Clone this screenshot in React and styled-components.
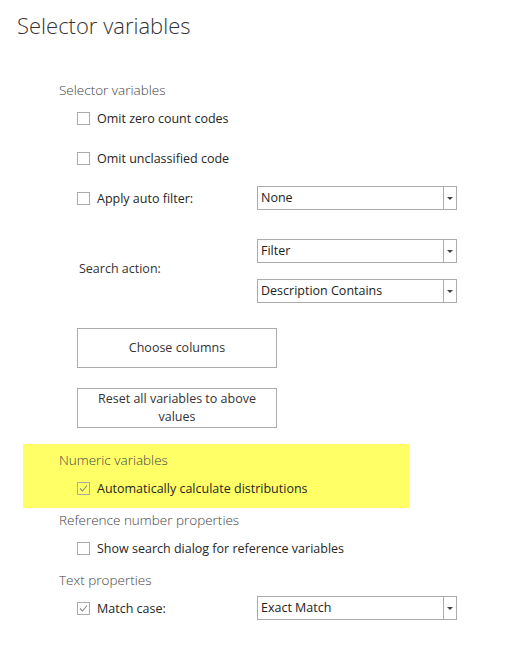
import React from "react";
import styled, { createGlobalStyle } from "styled-components";

const GlobalStyle = createGlobalStyle`
  html, body {
    margin: 0;
    padding: 0;
    background: #fff;
  }
  body {
    font-family: "Open Sans", "Noto Sans", Arial, sans-serif;
    color: #333;
  }
`;

const Page = styled.div`
  width: 520px;
  height: 659px;
  display: flex;
  flex-direction: column;
`;

const Heading = styled.h1`
  margin: 0;
  height: 50px;
  line-height: 50px;
  padding-left: 17px;
  font-size: 22px;
  font-weight: 300;
  color: #333;
`;

const Section = styled.div`
  box-sizing: border-box;
  display: flex;
  flex-direction: column;
  padding-left: ${(p) => p.indent || 59}px;
  margin-top: ${(p) => p.top || 0}px;
  gap: 4px;
`;

const Highlight = styled(Section)`
  margin-left: 23px;
  width: 386px;
  padding-left: 36px;
  padding-top: 4px;
  padding-bottom: 8px;
  background: #ffff66;
`;

const SectionTitle = styled.div`
  height: 24px;
  line-height: 24px;
  font-size: 13.5px;
  font-weight: 300;
  color: #444;
`;

const Items = styled.div`
  display: flex;
  flex-direction: column;
  gap: ${(p) => p.gap || 0}px;
  padding-left: 18px;
`;

const Row = styled.div`
  display: grid;
  grid-template-columns: 180px 200px;
  align-items: center;
  height: 24px;
`;

const CheckLabel = styled.label`
  display: flex;
  align-items: center;
  gap: 7px;
  font-size: 12.5px;
  color: #262626;
  white-space: nowrap;
`;

const Box = styled.span`
  box-sizing: border-box;
  flex: none;
  width: 13px;
  height: 13px;
  border: 1px solid #ababab;
  display: flex;
  align-items: center;
  justify-content: center;
`;

const SelectBox = styled.div`
  box-sizing: border-box;
  height: 24px;
  width: 200px;
  border: 1px solid #ababab;
  background: #fff;
  display: flex;
  align-items: stretch;
`;

const SelectValue = styled.div`
  flex: 1;
  padding-left: 3px;
  line-height: 22px;
  font-size: 12.5px;
  color: #222;
`;

const Arrow = styled.div`
  width: 12px;
  border-left: 1px solid #ababab;
  display: flex;
  align-items: center;
  justify-content: center;

  &::after {
    content: "";
    border-left: 3px solid transparent;
    border-right: 3px solid transparent;
    border-top: 3px solid #444;
  }
`;

const SearchBlock = styled.div`
  display: grid;
  grid-template-columns: 180px 200px;
  align-items: center;
  margin-top: 25px;
`;

const SearchLabel = styled.div`
  padding-left: 2px;
  padding-bottom: 6px;
  font-size: 12.5px;
  color: #333;
`;

const SelectStack = styled.div`
  display: flex;
  flex-direction: column;
  gap: 16px;
`;

const Button = styled.button`
  box-sizing: border-box;
  width: 200px;
  height: 40px;
  margin-top: ${(p) => p.top}px;
  border: 1px solid #ababab;
  background: #fff;
  font-family: inherit;
  font-size: 12.5px;
  line-height: 18px;
  color: #333;
  padding: 0 12px;
`;

const Checkbox = ({ checked, label }) => (
  <CheckLabel>
    <Box>
      {checked && (
        <svg width="9" height="9" viewBox="0 0 9 9">
          <path d="M1 4.5 L3.5 7 L8 1.5" fill="none" stroke="#8a8a8a" strokeWidth="1.1" />
        </svg>
      )}
    </Box>
    {label}
  </CheckLabel>
);

const Select = ({ value }) => (
  <SelectBox>
    <SelectValue>{value}</SelectValue>
    <Arrow />
  </SelectBox>
);

export default function App() {
  return (
    <Page>
      <GlobalStyle />
      <Heading>Selector variables</Heading>

      <Section top={28}>
        <SectionTitle>Selector variables</SectionTitle>
        <Items gap={16}>
          <Row>
            <Checkbox label="Omit zero count codes" />
          </Row>
          <Row>
            <Checkbox label="Omit unclassified code" />
          </Row>
          <Row>
            <Checkbox label="Apply auto filter:" />
            <Select value="None" />
          </Row>
        </Items>
        <Items>
          <SearchBlock>
            <SearchLabel>Search action:</SearchLabel>
            <SelectStack>
              <Select value="Filter" />
              <Select value="Description Contains" />
            </SelectStack>
          </SearchBlock>
          <Button top={25}>Choose columns</Button>
          <Button top={20}>Reset all variables to above values</Button>
        </Items>
      </Section>

      <Highlight top={16}>
        <SectionTitle>Numeric variables</SectionTitle>
        <Items>
          <Row>
            <Checkbox checked label="Automatically calculate distributions" />
          </Row>
        </Items>
      </Highlight>

      <Section>
        <SectionTitle>Reference number properties</SectionTitle>
        <Items>
          <Row>
            <Checkbox label="Show search dialog for reference variables" />
          </Row>
        </Items>
      </Section>

      <Section top={8}>
        <SectionTitle>Text properties</SectionTitle>
        <Items>
          <Row>
            <Checkbox checked label="Match case:" />
            <Select value="Exact Match" />
          </Row>
        </Items>
      </Section>
    </Page>
  );
}
